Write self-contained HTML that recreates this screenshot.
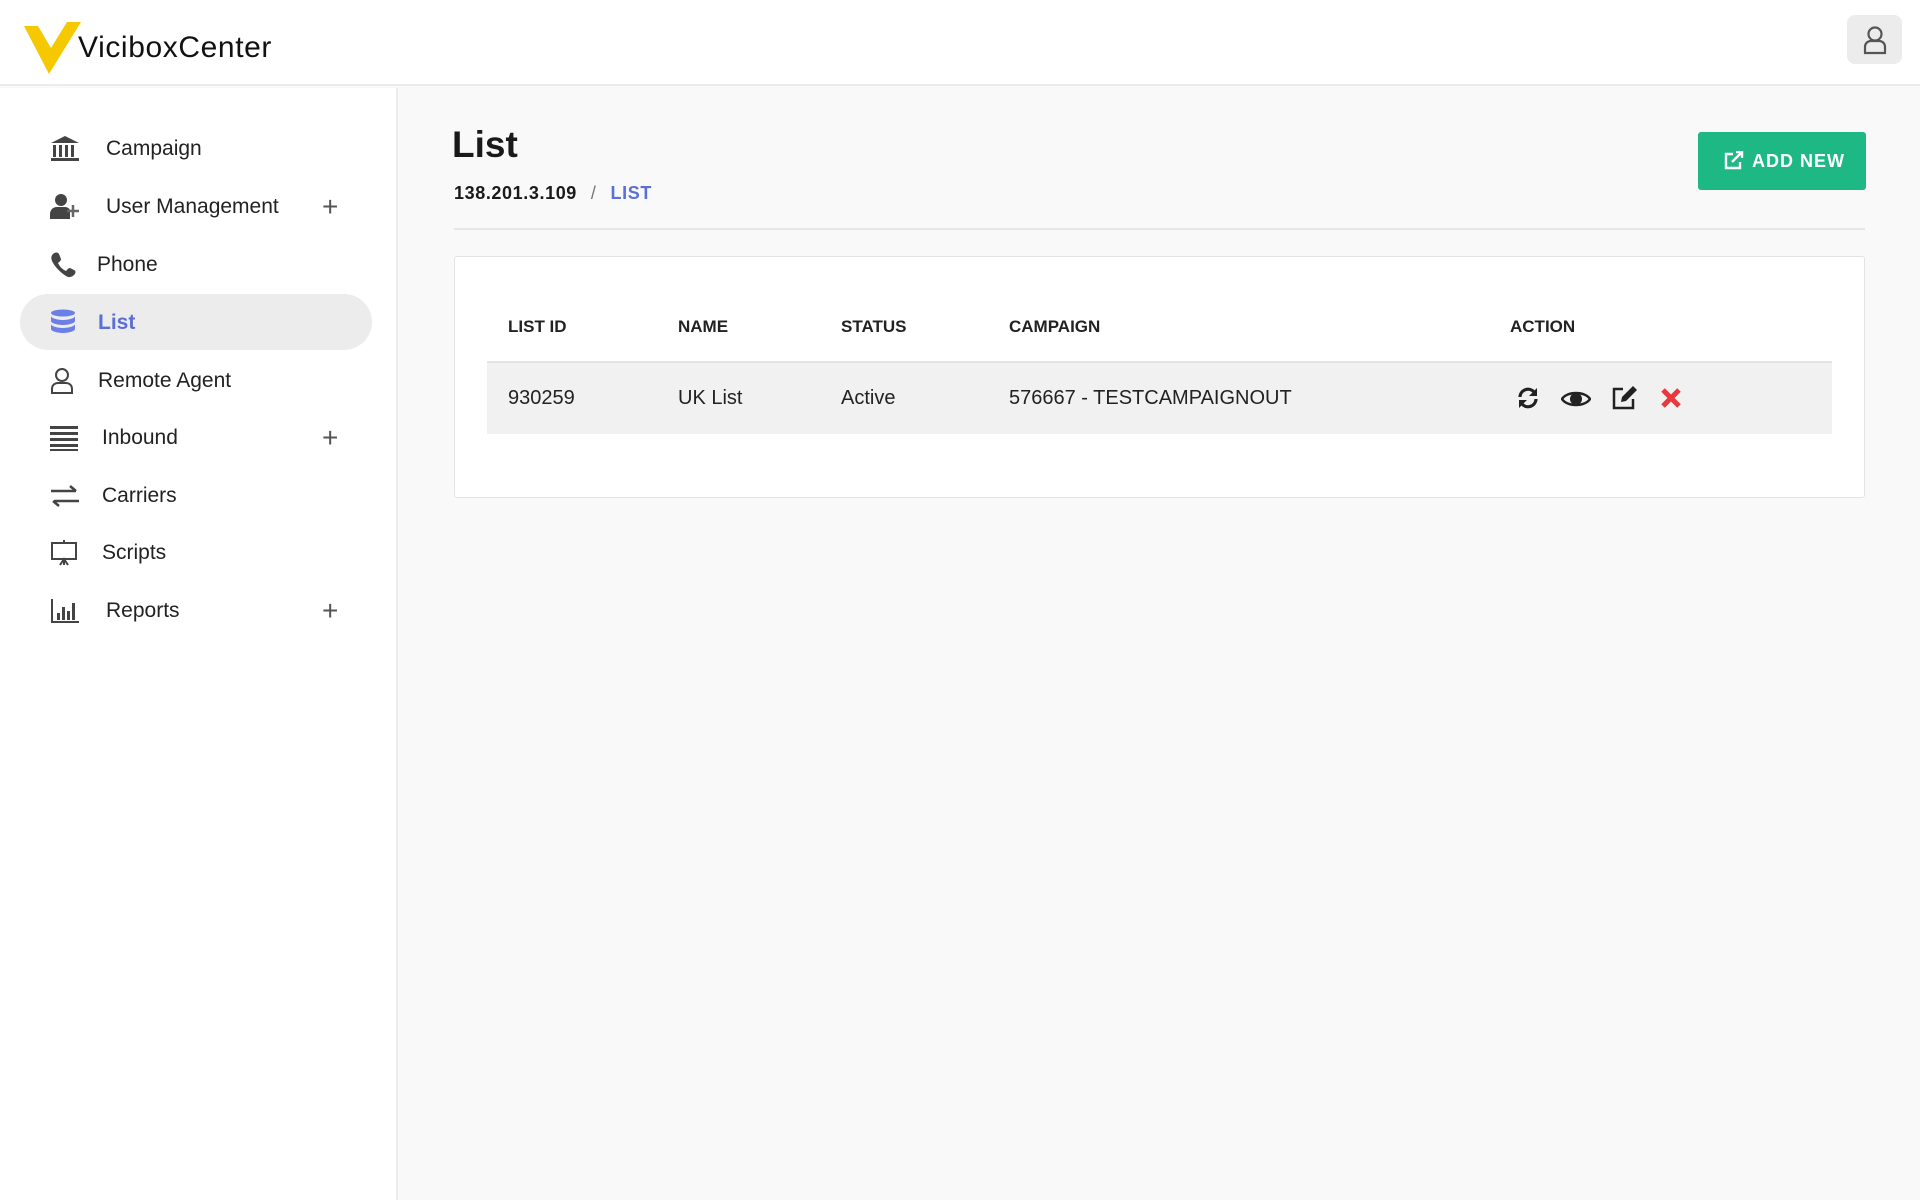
<!DOCTYPE html>
<html><head><meta charset="utf-8"><style>
*{box-sizing:border-box;margin:0;padding:0}
body{width:1920px;height:1200px;font-family:"Liberation Sans",sans-serif;background:#f9f9f9;position:relative;overflow:hidden;color:#222}
.header{position:absolute;left:0;top:0;width:1920px;height:86px;background:#fff;border-bottom:2px solid #ececec}
.logo{position:absolute;left:78px;top:31px;font-size:30px;letter-spacing:0.6px;color:#111}
.ubtn{position:absolute;left:1847px;top:15px;width:55px;height:49px;background:#ececec;border-radius:8px}
.side{position:absolute;left:0;top:88px;width:398px;height:1112px;background:#fff;border-right:2px solid #ececec}
.item{position:absolute;left:0;height:56px;width:398px;font-size:21px;color:#222}
.item .ic{position:absolute;left:50px;top:15px;width:30px;height:28px}
.item .t{position:absolute;top:17px}
.item .p{position:absolute;left:322px;top:13px;font-size:28px;color:#555;font-weight:300}
.active{position:absolute;left:20px;top:206px;width:352px;height:56px;background:#ececec;border-radius:28px}
h1{position:absolute;left:452px;top:124px;font-size:37px;font-weight:bold;color:#1a1a1a}
.bc{position:absolute;left:454px;top:183px;font-size:18px;font-weight:bold;color:#1a1a1a;letter-spacing:0.6px}
.bc .s{color:#777;margin:0 14px;font-weight:normal}
.bc .l{color:#5b6fd6}
.add{position:absolute;left:1698px;top:132px;width:168px;height:58px;background:#1db883;border-radius:3px;color:#fff;font-weight:bold;font-size:18px;letter-spacing:1px;line-height:58px;padding-left:54px}
.hr{position:absolute;left:454px;top:228px;width:1411px;height:2px;background:#e6e6e6}
.card{position:absolute;left:454px;top:256px;width:1411px;height:242px;background:#fff;border:1px solid #e3e3e3;border-radius:3px}
.th{position:absolute;top:317px;font-size:17px;font-weight:bold;color:#222}
.row{position:absolute;left:487px;top:361px;width:1345px;height:73px;background:#f1f1f1;border-top:2px solid #e4e4e4}
.td{position:absolute;top:387px;font-size:20px;color:#222}
</style></head><body>
<div class="header">
<svg style="position:absolute;left:24px;top:22px" width="58" height="52" viewBox="0 0 58 52"><polygon points="0,4 14,4 27,26 43,0 57,0 25,52" fill="#f5c800"/></svg>
<div class="logo">ViciboxCenter</div>
<div class="ubtn"><svg style="position:absolute;left:15px;top:10px" width="26" height="30" viewBox="0 0 26 30" fill="none" stroke="#555" stroke-width="2.2"><circle cx="13" cy="9" r="6.5"/><path d="M3 28v-6c0-4 3-6 6-6h8c3 0 6 2 6 6v6z"/></svg></div>
</div>
<div class="side">
<div class="active"></div>
<div class="item" style="top:32px"><svg class="ic" viewBox="0 0 30 28" fill="#444"><polygon points="15,1 29,8 1,8"/><rect x="3" y="10" width="3" height="12"/><rect x="9" y="10" width="3" height="12"/><rect x="15" y="10" width="3" height="12"/><rect x="21" y="10" width="3" height="12"/><rect x="1" y="23" width="28" height="3"/></svg><span class="t" style="left:106px">Campaign</span></div>
<div class="item" style="top:90px"><svg class="ic" viewBox="0 0 30 28" fill="#444"><circle cx="11" cy="7" r="6"/><path d="M0 26v-5c0-4 3-7 7-7h8c3 0 5 2 5 4v8z"/><path d="M23 12v12M17 18h12" stroke="#666" stroke-width="2.5"/></svg><span class="t" style="left:106px">User Management</span><span class="p">+</span></div>
<div class="item" style="top:148px"><svg class="ic" viewBox="0 0 30 28" fill="#444"><path d="M3 3c2-2 5-2 6 0l2 5c0 2-2 3-3 4 2 4 4 6 8 8 1-1 2-3 4-3l4 2c2 1 2 3 0 5-2 2-5 3-8 1C10 21 5 16 2 10 1 7 1 5 3 3z"/></svg><span class="t" style="left:97px">Phone</span></div>
<div class="item" style="top:206px;color:#5b6fd6;font-weight:bold"><svg class="ic" viewBox="0 0 30 28" fill="#6b7fe6"><ellipse cx="13" cy="4" rx="12" ry="3.5"/><path d="M1 7c0 2 6 4 12 4s12-2 12-4v5c0 2-6 4-12 4S1 14 1 12z"/><path d="M1 15c0 2 6 4 12 4s12-2 12-4v5c0 2-6 4-12 4S1 22 1 20z"/></svg><span class="t" style="left:98px">List</span></div>
<div class="item" style="top:264px"><svg class="ic" viewBox="0 0 30 28" fill="none" stroke="#444" stroke-width="2"><circle cx="12" cy="8" r="6"/><path d="M2 26v-4c0-4 3-6 6-6h8c3 0 6 2 6 6v4z"/></svg><span class="t" style="left:98px">Remote Agent</span></div>
<div class="item" style="top:321px"><svg class="ic" viewBox="0 0 30 28" fill="#444"><rect x="0" y="2" width="28" height="3"/><rect x="0" y="8" width="28" height="3"/><rect x="0" y="14" width="28" height="3"/><rect x="0" y="20" width="28" height="3"/><rect x="0" y="25" width="28" height="2"/></svg><span class="t" style="left:102px">Inbound</span><span class="p">+</span></div>
<div class="item" style="top:379px"><svg class="ic" viewBox="0 0 30 28" fill="none" stroke="#444" stroke-width="2.5"><path d="M1 9h25M20 4l6 5M29 19H4M9 24l-6-5"/></svg><span class="t" style="left:102px">Carriers</span></div>
<div class="item" style="top:436px"><svg class="ic" viewBox="0 0 30 28" fill="none" stroke="#444" stroke-width="2"><rect x="2" y="4" width="24" height="16"/><path d="M14 1v3M10 26l4-6 4 6M14 20v6"/></svg><span class="t" style="left:102px">Scripts</span></div>
<div class="item" style="top:494px"><svg class="ic" viewBox="0 0 30 28" fill="#444"><rect x="1" y="2" width="2" height="24"/><rect x="1" y="24" width="28" height="2"/><rect x="7" y="16" width="3" height="7"/><rect x="12" y="10" width="3" height="13"/><rect x="17" y="14" width="3" height="9"/><rect x="22" y="6" width="3" height="17"/></svg><span class="t" style="left:106px">Reports</span><span class="p">+</span></div>
</div>
<h1>List</h1>
<div class="bc">138.201.3.109<span class="s">/</span><span class="l">LIST</span></div>
<div class="add"><svg style="position:absolute;left:26px;top:19px" width="20" height="19" viewBox="0 0 20 19" fill="none" stroke="#fff" stroke-width="2.4"><path d="M9 3H2v14h14v-6"/><path d="M8 11L18 1M12 1h6v6"/></svg>ADD NEW</div>
<div class="hr"></div>
<div class="card"></div>
<div class="th" style="left:508px">LIST ID</div>
<div class="th" style="left:678px">NAME</div>
<div class="th" style="left:841px">STATUS</div>
<div class="th" style="left:1009px">CAMPAIGN</div>
<div class="th" style="left:1510px">ACTION</div>
<div class="row"></div>
<div class="td" style="left:508px">930259</div>
<div class="td" style="left:678px">UK List</div>
<div class="td" style="left:841px">Active</div>
<div class="td" style="left:1009px">576667 - TESTCAMPAIGNOUT</div>
<svg style="position:absolute;left:1516px;top:386px" width="24" height="24" viewBox="0 0 24 24" fill="none" stroke="#222" stroke-width="3.2"><path d="M4 11a8 8 0 0 1 14-5"/><path d="M20 13a8 8 0 0 1-14 5"/><polygon points="21,2 21,10 13,10" fill="#222" stroke="none"/><polygon points="3,22 3,14 11,14" fill="#222" stroke="none"/></svg>
<svg style="position:absolute;left:1561px;top:389px" width="30" height="20" viewBox="0 0 30 20"><path d="M1 10C6 2 24 2 29 10 24 18 6 18 1 10z" fill="none" stroke="#222" stroke-width="2.5"/><circle cx="15" cy="10" r="6" fill="#222"/></svg>
<svg style="position:absolute;left:1611px;top:385px" width="27" height="26" viewBox="0 0 27 26" fill="none" stroke="#222" stroke-width="2.5"><path d="M12 4H3v19h19v-9"/><path d="M10 17l1-5L22 1l4 4-11 11z" fill="#222" stroke="none"/></svg>
<svg style="position:absolute;left:1660px;top:387px" width="22" height="22" viewBox="0 0 22 22" stroke="#e8383d" stroke-width="5"><path d="M3 3l16 16M19 3L3 19"/></svg>
</body></html>
